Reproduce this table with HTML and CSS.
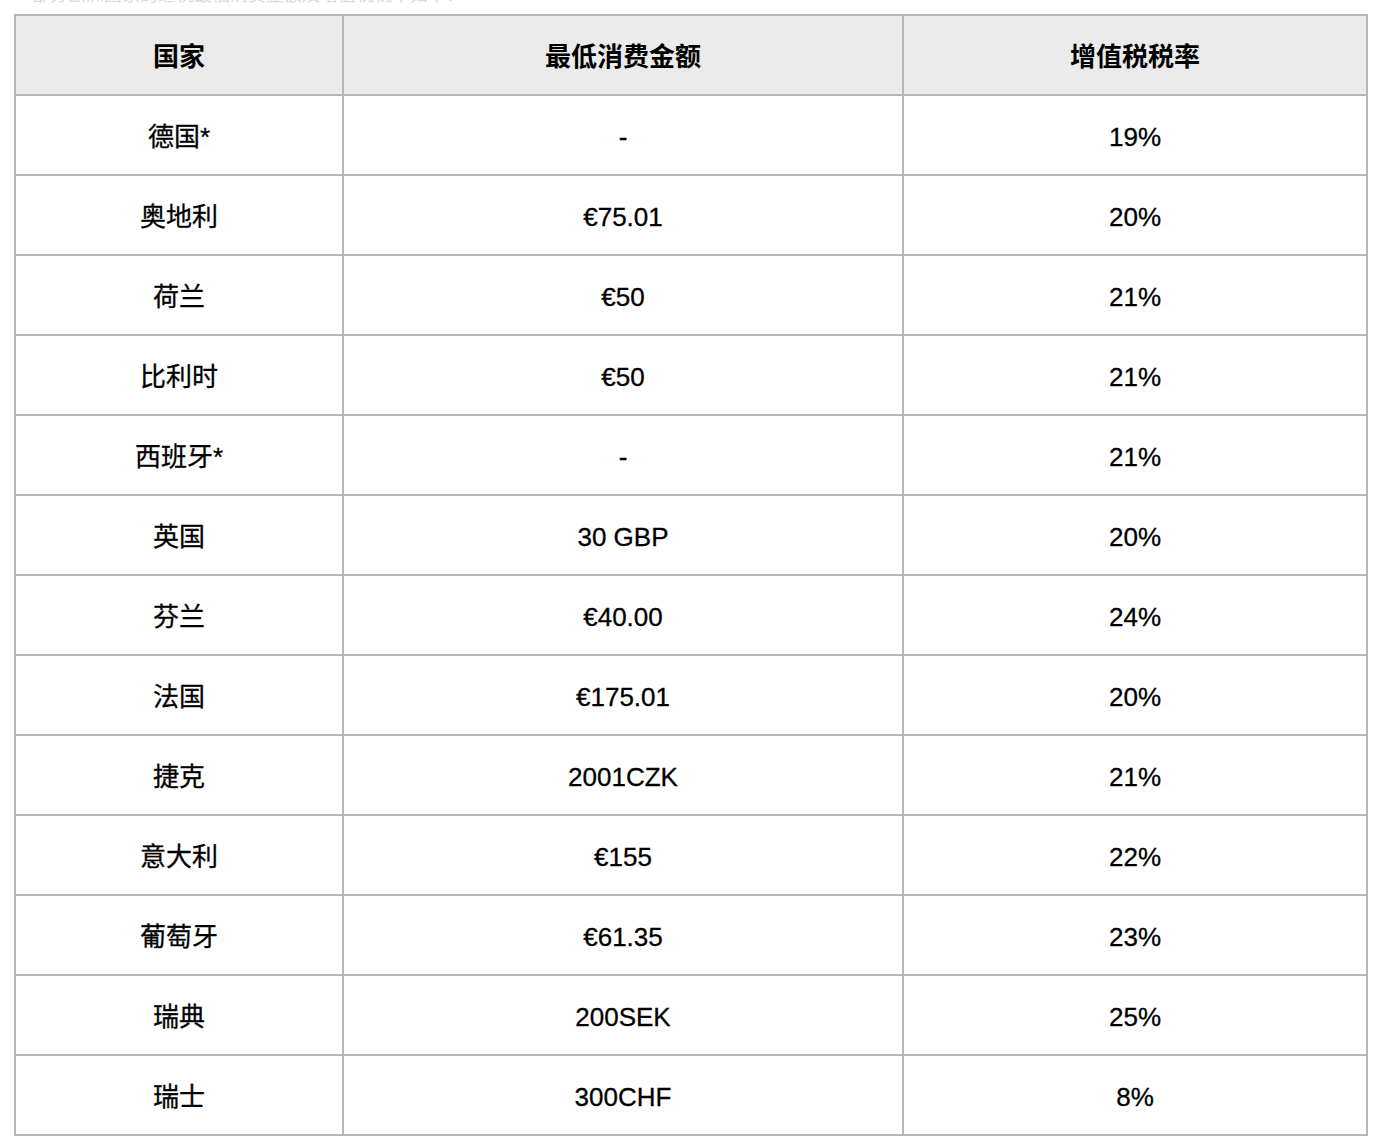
FILE: index.html
```html
<!DOCTYPE html>
<html lang="zh-CN">
<head>
<meta charset="utf-8">
<title>增值税税率</title>
<link rel="stylesheet" href="styles.css">
</head>
<body>
<div class="page">
  <p class="intro">部分欧洲国家的退税最低消费金额及增值税税率如下：</p>
  <table class="tax">
    <thead>
      <tr><th class="c1">国家</th><th class="c2">最低消费金额</th><th class="c3">增值税税率</th></tr>
    </thead>
    <tbody>
      <tr><td>德国*</td><td>-</td><td>19%</td></tr>
      <tr><td>奥地利</td><td>€75.01</td><td>20%</td></tr>
      <tr><td>荷兰</td><td>€50</td><td>21%</td></tr>
      <tr><td>比利时</td><td>€50</td><td>21%</td></tr>
      <tr><td>西班牙*</td><td>-</td><td>21%</td></tr>
      <tr><td>英国</td><td>30 GBP</td><td>20%</td></tr>
      <tr><td>芬兰</td><td>€40.00</td><td>24%</td></tr>
      <tr><td>法国</td><td>€175.01</td><td>20%</td></tr>
      <tr><td>捷克</td><td>2001CZK</td><td>21%</td></tr>
      <tr><td>意大利</td><td>€155</td><td>22%</td></tr>
      <tr><td>葡萄牙</td><td>€61.35</td><td>23%</td></tr>
      <tr><td>瑞典</td><td>200SEK</td><td>25%</td></tr>
      <tr><td>瑞士</td><td>300CHF</td><td>8%</td></tr>
    </tbody>
  </table>
</div>
</body>
</html>
```
FILE: styles.css
```css
html, body {
  margin: 0;
  padding: 0;
  background: #ffffff;
}
.page {
  padding: 14px;
  font-family: "Liberation Sans", "Noto Sans CJK SC", sans-serif;
  color: #111;
}
.intro {
  margin: -29px 0 9px 18px;
  font-size: 18px;
  line-height: 20px;
  height: 20px;
  color: #dadada;
}
.tax {
  border-collapse: separate;
  border-spacing: 0;
  width: 1354px;
  table-layout: fixed;
  border-top: 2px solid #b7b7b7;
  border-left: 2px solid #b7b7b7;
}
.tax th, .tax td {
  border-right: 2px solid #b7b7b7;
  border-bottom: 2px solid #b7b7b7;
  height: 80px;
  padding: 4px 0 0;
  text-align: center;
  vertical-align: middle;
  font-size: 26px;
  line-height: 30px;
  box-sizing: border-box;
}
.tax th {
  background: #ebebeb;
  font-weight: bold;
  color: #000;
}
.tax td {
  font-weight: normal;
  color: #000;
  -webkit-text-stroke: 0.3px #000;
}
.c1 { width: 328px; }
.c2 { width: 560px; }
.c3 { width: 464px; }
```
